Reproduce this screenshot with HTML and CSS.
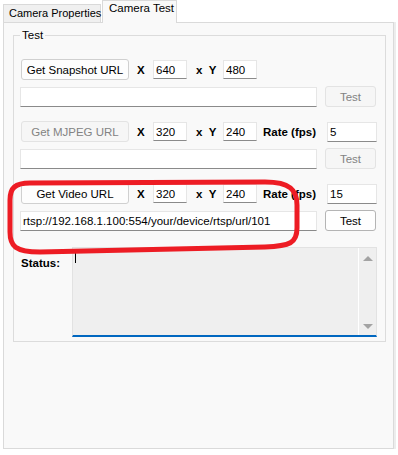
FILE: index.html
```html
<!DOCTYPE html>
<html lang="en">
<head>
    <meta charset="UTF-8">
    <meta name="viewport" content="width=device-width, initial-scale=1.0">
    <title>Camera Test</title>
    <link rel="stylesheet" href="styles.css">
</head>
<body>
    <div class="window">
        <div class="tabs">
            <div class="tab">Camera Properties</div>
            <div class="tab active">Camera Test</div>
        </div>
        <div class="page">
            <fieldset class="group">
                <legend>Test</legend>

                <div class="row row-btn first">
                    <button class="btn">Get Snapshot URL</button>
                    <span class="lbl lbl-x">X</span>
                    <input class="num" type="text" value="640">
                    <span class="lbl lbl-y">x&nbsp;&nbsp;Y</span>
                    <input class="num" type="text" value="480">
                </div>
                <div class="row row-url">
                    <input class="url" type="text" value="">
                    <button class="btn btn-test" disabled>Test</button>
                </div>

                <div class="row row-btn">
                    <button class="btn" disabled>Get MJPEG URL</button>
                    <span class="lbl lbl-x">X</span>
                    <input class="num" type="text" value="320">
                    <span class="lbl lbl-y">x&nbsp;&nbsp;Y</span>
                    <input class="num" type="text" value="240">
                    <span class="lbl lbl-rate">Rate (fps)</span>
                    <input class="rate" type="text" value="5">
                </div>
                <div class="row row-url">
                    <input class="url" type="text" value="">
                    <button class="btn btn-test" disabled>Test</button>
                </div>

                <div class="row row-btn">
                    <button class="btn">Get Video URL</button>
                    <span class="lbl lbl-x">X</span>
                    <input class="num" type="text" value="320">
                    <span class="lbl lbl-y">x&nbsp;&nbsp;Y</span>
                    <input class="num" type="text" value="240">
                    <span class="lbl lbl-rate">Rate (fps)</span>
                    <input class="rate" type="text" value="15">
                </div>
                <div class="row row-url">
                    <input class="url" type="text" value="rtsp://192.168.1.100:554/your/device/rtsp/url/101">
                    <button class="btn btn-test active">Test</button>
                </div>

                <div class="status">
                    <span class="lbl status-lbl">Status:</span>
                    <div class="log">
                        <div class="log-text"><span class="caret"></span></div>
                        <div class="scroll">
                            <span class="arrow up"></span>
                            <span class="arrow down"></span>
                        </div>
                    </div>
                </div>
            </fieldset>
        </div>

        <!-- red highlight drawn over the video row -->
        <svg class="mark" width="398" height="455" viewBox="0 0 398 455">
            <path d="M 30 183 L 265 182 C 290 182 297 190 297 205 L 297 228 C 297 243 290 246 265 247 L 40 252 C 15 252 10 246 10 232 L 10 200 C 10 188 15 183 30 183 Z"
                  fill="none" stroke="#ed1c24" stroke-width="5" />
        </svg>
    </div>
</body>
</html>
```

FILE: styles.css
```css
body {
    margin: 0;
    background-color: #ffffff;
    font-family: 'Liberation Sans', Arial, sans-serif;
    font-size: 11.5px;
    color: #000000;
}

.window {
    position: relative;
    width: 398px;
    height: 455px;
}

.tabs {
    display: flex;
    align-items: flex-end;
    height: 22px;
    padding-left: 3px;
}

.tab {
    box-sizing: border-box;
    width: 98px;
    height: 18px;
    padding-left: 5px;
    font-size: 11px;
    line-height: 17px;
    background-color: #f0f0f0;
    border: 1px solid #d9d9d9;
    border-bottom: none;
    white-space: nowrap;
}

.tab.active {
    position: relative;
    width: 75px;
    height: 23px;
    margin-left: 1px;
    margin-bottom: -1px;
    padding-left: 6px;
    font-size: 11.5px;
    line-height: 14px;
    background-color: #f9f9f9;
}

.page {
    box-sizing: border-box;
    width: 391px;
    height: 427px;
    margin-left: 3px;
    padding: 5px 0 0 9px;
    background-color: #f9f9f9;
    border: 1px solid #dadada;
    box-shadow: 2px 0 0 #ededed;
}

.group {
    box-sizing: border-box;
    width: 373px;
    margin: 0;
    padding: 17px 6px 4px 6px;
    border: 1px solid #dcdcdc;
}

.group legend {
    padding: 0 2px;
    line-height: 14px;
}

.row {
    display: flex;
    align-items: center;
    height: 21px;
}

.row-btn {
    margin-top: 14px;
}

.row-btn.first {
    margin-top: 0;
}

.row-url {
    margin-top: 6px;
}

input {
    box-sizing: border-box;
    margin: 0;
    padding: 0 2px;
    font: inherit;
    color: #000000;
    background-color: #ffffff;
    border: 1px solid #e6e6e6;
    border-bottom-color: #8a8a8a;
    outline: none;
}

.num {
    width: 34px;
    height: 19px;
}

.rate {
    width: 50px;
    height: 20px;
}

.url {
    width: 297px;
    height: 20px;
}

.btn {
    box-sizing: border-box;
    width: 108px;
    height: 21px;
    margin: 0 0 0 1px;
    padding: 0;
    font: inherit;
    color: #000000;
    background-color: #fdfdfd;
    border: 1px solid #d0d0d0;
    border-radius: 3px;
}

.btn:disabled {
    color: #838383;
    background-color: #f6f6f6;
    border-color: #e3e3e3;
}

.btn-test {
    width: 51px;
    margin-left: 8px;
}

.btn-test.active {
    border-color: #b4b4b4;
    background-color: #fefefe;
}

.lbl {
    font-weight: bold;
    white-space: nowrap;
}

.lbl-x {
    width: 16px;
    margin-left: 8px;
}

.lbl-y {
    width: 27px;
    margin-left: 9px;
}

.lbl-rate {
    width: 64px;
    margin-left: 6px;
}

.status {
    display: flex;
    margin-top: 16px;
    margin-left: 1px;
}

.status-lbl {
    width: 51px;
    margin-top: 9px;
    line-height: 14px;
}

.log {
    box-sizing: border-box;
    display: flex;
    width: 305px;
    height: 90px;
    background-color: #efefef;
    border: 1px solid #e2e2e2;
    border-bottom: 2px solid #0067c0;
}

.log-text {
    flex: 1;
    padding: 1px 0 0 2px;
}

.caret {
    display: block;
    width: 1px;
    height: 14px;
    background-color: #000000;
}

.scroll {
    display: flex;
    flex-direction: column;
    justify-content: space-between;
    align-items: center;
    width: 17px;
    padding: 8px 0 6px;
    border-left: 1px solid #ffffff;
}

.arrow {
    width: 0;
    height: 0;
    border-left: 5px solid transparent;
    border-right: 5px solid transparent;
}

.arrow.up {
    border-bottom: 5px solid #a3a3a3;
}

.arrow.down {
    border-top: 5px solid #a3a3a3;
}

.mark {
    position: absolute;
    left: 0;
    top: 0;
    pointer-events: none;
}
```
